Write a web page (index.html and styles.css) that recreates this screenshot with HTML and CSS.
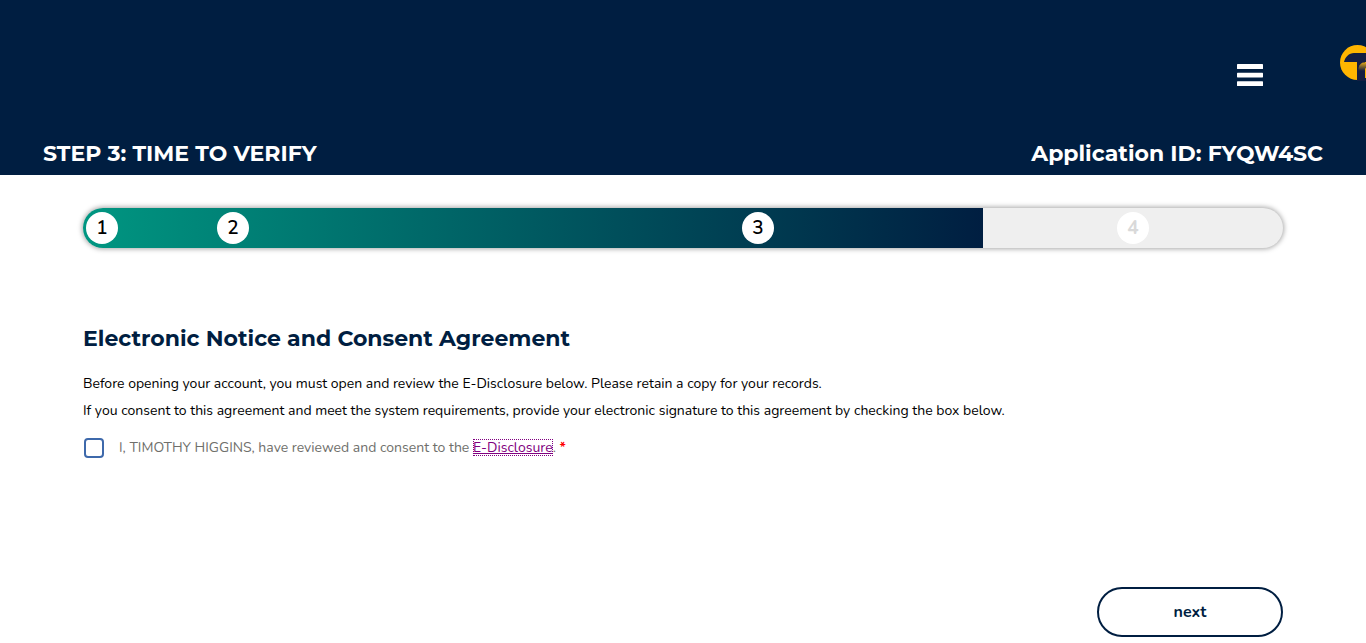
FILE: index.html
```html
<!DOCTYPE html>
<html lang="en">
<head>
<meta charset="utf-8">
<meta name="viewport" content="width=device-width, initial-scale=1">
<title>Step 3: Time to Verify</title>
<link rel="stylesheet" href="styles.css">
</head>
<body>
<header class="header">
  <div class="topbar">
    <button class="menu" type="button" aria-label="Menu">
      <svg width="26" height="22" viewBox="0 0 26 22" fill="#fff" aria-hidden="true"><rect width="26" height="5" rx=".6"/><rect y="8.8" width="26" height="4.6" rx=".6"/><rect y="17.2" width="26" height="4.8" rx=".6"/></svg>
    </button>
    <a class="logo" href="#" aria-label="Home">
      <svg width="36" height="36" viewBox="0 0 36 36" aria-hidden="true">
        <defs><linearGradient id="fade" x1="0" y1="0" x2="0" y2="1"><stop offset="0" stop-color="#e0a416"/><stop offset=".45" stop-color="#141f42"/></linearGradient></defs>
        <circle cx="17.5" cy="17.5" r="17.5" fill="#ffb500"/>
        <path d="M4 17C5 12 9 8 14 8H36V17Z" fill="#141e43"/>
        <path d="M17 16H25V36H17Z" fill="#141e43"/>
        <path d="M18.500 35V23Q20 17.500 24 17.500H36V36H18.500Z" fill="url(#fade)"/>
        <path d="M25 24Q26 22 29 22H36V33H25Z" fill="#ffb500"/>
      </svg>
    </a>
  </div>
  <div class="titlebar">
    <h1 class="title">STEP 3: TIME TO VERIFY</h1>
    <p class="title application">Application ID: FYQW4SC</p>
  </div>
</header>
<main class="main">
  <div class="progress">
    <div class="fill"></div>
    <ol class="steps">
      <li class="step">1</li>
      <li class="step">2</li>
      <li class="step" aria-current="step">3</li>
      <li class="step pending">4</li>
    </ol>
  </div>
  <form class="agreement">
    <h2 class="heading">Electronic Notice and Consent Agreement</h2>
    <p class="copy">Before opening your account, you must open and review the E-Disclosure below. Please retain a copy for your records.</p>
    <p class="copy">If you consent to this agreement and meet the system requirements, provide your electronic signature to this agreement by checking the box below.</p>
    <div class="consent">
      <input class="checkbox" type="checkbox" id="consent" required>
      <label class="label" for="consent">I, TIMOTHY HIGGINS, have reviewed and consent to the <a class="disclosure" href="#">E-Disclosure</a>. <span class="required">*</span></label>
    </div>
    <div class="actions"><button class="next" type="submit">next</button></div>
  </form>
</main>
</body>
</html>
```
FILE: styles.css
```css
* { box-sizing: border-box; }
body {
  margin: 0;
  background: #fff;
  color: #000;
  font-family: Nunito, "Nunito Sans", "Open Sans", sans-serif;
  font-size: 14px;
}
.header {
  background: #001e41;
  color: #fff;
  overflow: hidden;
}
.topbar {
  display: flex;
  justify-content: flex-end;
  align-items: flex-start;
  gap: 77px;
  padding-top: 45px;
}
.menu {
  display: flex;
  margin-top: 19px;
  padding: 0;
  border: 0;
  background: none;
  cursor: pointer;
}
.logo { display: flex; margin-right: -10px; }
.titlebar {
  display: flex;
  justify-content: space-between;
  gap: 24px;
  padding: 54px 43px 7px;
}
.title, .heading {
  margin: 0;
  font-family: Montserrat, Inter, sans-serif;
  font-size: 22px;
  line-height: 28px;
  font-weight: 700;
}
.main {
  max-width: 1248px;
  margin: 0 auto;
  padding: 33px 24px 6px;
}
.progress {
  display: grid;
  height: 40px;
  border-radius: 20px;
  background: #efefef;
  box-shadow: 0 0 5px 1px rgba(0, 0, 0, .35);
}
.fill {
  grid-area: 1 / 1;
  width: 75%;
  border-radius: 20px 0 0 20px;
  background: linear-gradient(90deg, #009681, #001e41);
}
.steps {
  grid-area: 1 / 1;
  display: grid;
  grid-template-columns: 131fr 525fr 375fr 166fr;
  align-items: center;
  margin: 0;
  padding: 0 0 0 3px;
  list-style: none;
}
.step {
  width: 32px;
  height: 32px;
  border-radius: 50%;
  background: #fff;
  font-size: 19px;
  line-height: 32px;
  font-weight: 600;
  text-align: center;
}
.pending { color: #d9d9d9; font-weight: 700; }
.agreement { padding-top: 77px; }
.heading { margin-bottom: 17px; color: #001e41; }
.copy { margin: 0; line-height: 27px; }
.consent {
  display: flex;
  align-items: center;
  gap: 15px;
  margin-top: 14px;
  padding-left: 1px;
}
.checkbox {
  appearance: none;
  flex: none;
  width: 20px;
  height: 20px;
  margin: 0;
  border: 2px solid #3e69ab;
  border-radius: 4px;
}
.checkbox:checked { background: #3e69ab; }
.label { color: #6f6f6b; line-height: 20px; }
.disclosure {
  display: inline-block;
  color: #800080;
  line-height: 17px;
  outline: 1px dotted #800080;
  outline-offset: -1px;
}
.required { color: #f00; font-weight: 700; }
.actions {
  display: flex;
  justify-content: flex-end;
  margin-top: 129px;
}
.next {
  width: 186px;
  height: 50px;
  border: 2px solid #001e41;
  border-radius: 25px;
  background: #fff;
  color: #001e41;
  font-family: inherit;
  font-size: 16px;
  font-weight: 700;
  cursor: pointer;
}
```
